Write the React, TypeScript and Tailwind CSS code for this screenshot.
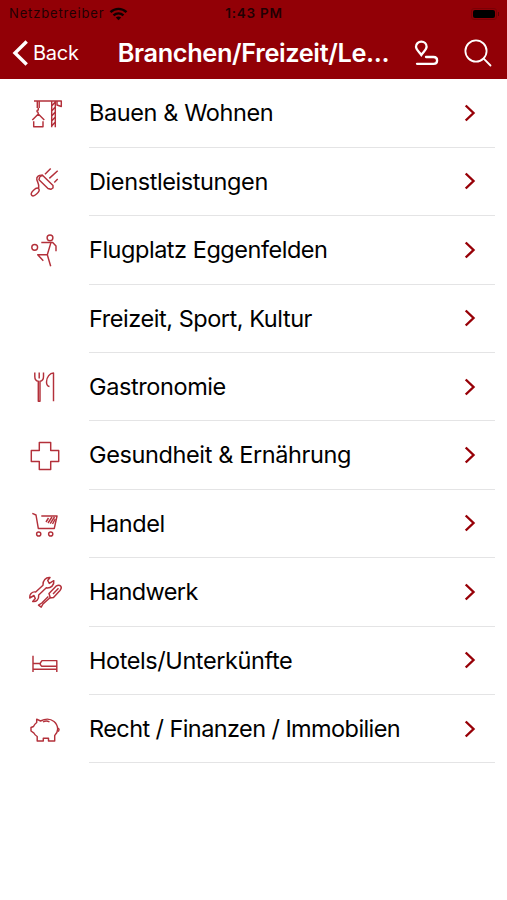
import type { ReactNode } from 'react';

type Category = {
  label: string;
  tracking: string;
  icon?: ReactNode;
};

const categories: Category[] = [
  {
    label: 'Bauen & Wohnen',
    tracking: 'tracking-[-0.4px]',
    icon: (
      <>
        <path d="M9 7H36.3V12.5L32 11V7M26.7 7V33.3M30.3 7V33.3M26.7 12L30.3 8M26.7 17L30.3 13M26.7 22L30.3 18M26.7 27L30.3 23M26.7 32L30.3 28" />
        <path d="M12.3 7V14M14.2 7V14M13.3 14V16C11.5 16 11.5 18 13 18.3L13.3 20M7.3 26L13.3 20L19.3 26M8.7 27.3V32.7H18V27.3" />
      </>
    ),
  },
  {
    label: 'Dienstleistungen',
    tracking: 'tracking-[-0.4px]',
    icon: (
      <>
        <path d="M25.7 6.4L20 12.2M32.7 8.7L24.3 16.4M32.7 17L29.3 20.4" />
        <path d="M17.5 13.2L28 23.5V26L25.8 27.3L23 26.5L14 17.8L14.7 15Z" />
        <path d="M17.5 13.2C14 12.8 11.3 14.5 11.8 17.5C12.3 20 14.5 22 13.7 26.2" />
        <ellipse cx="10.2" cy="30" rx="4.8" ry="2.4" transform="rotate(-43 10.2 30)" />
      </>
    ),
  },
  {
    label: 'Flugplatz Eggenfelden',
    tracking: 'tracking-[-0.47px]',
    icon: (
      <>
        <circle cx="25" cy="7.8" r="2.9" />
        <circle cx="9.7" cy="17.3" r="2.9" />
        <path d="M16.3 12.4H27.7L31 16V21.3M26 12.4L22.3 24.7L25.7 36.3M22.3 24.7H12.7L18.3 30.7" />
      </>
    ),
  },
  { label: 'Freizeit, Sport, Kultur', tracking: 'tracking-[-0.45px]' },
  {
    label: 'Gastronomie',
    tracking: 'tracking-[-0.4px]',
    icon: (
      <path d="M9.8 5.5V9.5C9.8 12 11 14 13.3 14.3V34.3H15V14.3C17.2 14 18.5 12 18.5 9.5V5.5M14.2 5.5V11.5M28.5 34.3V6C25 6 21.5 10 21.5 15C21.5 17.5 22.7 19.2 24.5 19.5" />
    ),
  },
  {
    label: 'Gesundheit & Ernährung',
    tracking: 'tracking-[-0.38px]',
    icon: (
      <path d="M14.3 6.5H25.7V14.5H33.7V25.5H25.7V33.5H14.3V25.5H6.3V14.5H14.3Z" />
    ),
  },
  {
    label: 'Handel',
    tracking: 'tracking-[-0.45px]',
    icon: (
      <>
        <path d="M7.3 9.4L11 11L13.3 24.4H29.3L32 12H16.3" />
        <circle cx="13.7" cy="30" r="2.1" />
        <circle cx="25.7" cy="30" r="2.1" />
        <path d="M21 18L23.5 14M23 19L27 13M25.2 19.7L29.5 13M27.5 20L30.3 15" />
      </>
    ),
  },
  {
    label: 'Handwerk',
    tracking: 'tracking-[-0.6px]',
    icon: (
      <>
        <path d="M10.7 20L18 13.2C17.4 8.5 21 5 25 5.5L22.7 8.5L24.3 11.4L28.8 8.7C29.5 13 26 16.5 21.3 15.8L13.7 23C14 27 11.7 30.2 7.7 29.5L10.3 26.5L9 23.5L4.7 26C4 22.5 7 19.3 10.7 20Z" />
        <path d="M25.2 25.5L24 21.5L31 14.2C35 11.7 38 15 35 18.5L28.5 25.5L24.7 26L18 32L16.2 35.2L13.5 33.2L16.8 31L23.3 24.5M28 22L33.5 16.3" />
      </>
    ),
  },
  {
    label: 'Hotels/Unterkünfte',
    tracking: 'tracking-[-0.42px]',
    icon: (
      <path d="M8 14.8V31M8 22.4H15.3M15.3 22L17 19.6H31.8V31M15.3 22V23.5L16.5 25.2H31.8M8 28.3H31.8" />
    ),
  },
  {
    label: 'Recht / Finanzen / Immobilien',
    tracking: 'tracking-[-0.59px]',
    icon: (
      <>
        <path d="M11.7 10.2L15.5 12C20 9.7 25.5 9.7 29 12.5C31.5 14.5 32.5 17 32.7 20C32.5 23 31.5 25 29.7 26.5V32H23.5V29.2H18.3V32H12.2V27.5C10.5 26.5 9.5 25.5 8.7 23.8L6 22V18.5L8.5 17.5C9.3 15.5 10.5 14.5 11.7 13.5Z" />
        <path d="M18 13C20 11.7 22.5 11.7 24.5 13M32.7 19.5C34.5 19 34.5 22.5 32.5 22.5" />
      </>
    ),
  },
];

const StatusBar = () => (
  <div className="relative flex h-[27px] items-center justify-between pl-[9px] pr-[8px] text-[13px] text-[#210003]">
    <div className="flex items-center gap-[4px]">
      <span className="tracking-[0.85px]">Netzbetreiber</span>
      <svg width="19" height="14" viewBox="0 0 18 14" fill="none" stroke="#100001" strokeWidth="2.4">
        <path d="M1 5.2C5.5 0.8 12.5 0.8 17 5.2M4 8.4C7 5.7 11 5.7 14 8.4" />
        <path d="M6.3 10.5C8 9.3 10 9.3 11.7 10.5L9 13.2Z" fill="#100001" stroke="none" />
      </svg>
    </div>
    <span className="absolute left-1/2 -translate-x-1/2 whitespace-nowrap pl-px text-[13.5px] font-semibold tracking-[0.75px]">
      1:43 PM
    </span>
    <div className="flex items-center gap-px">
      <div className="h-[12px] w-[26px] rounded-[3px] border border-[#7a0005] p-px">
        <div className="h-full rounded-[2px] bg-black" />
      </div>
      <div className="h-[4px] w-px bg-[#5c0003]" />
    </div>
  </div>
);

const NavBar = () => (
  <div className="flex h-[52px] items-center pl-[12px] pr-[15px] text-white">
    <button className="flex items-center">
      <svg width="17" height="26" viewBox="0 0 17 26" fill="none" stroke="currentColor" strokeWidth="3.4">
        <path d="M14.7 1.5L3 13L14.7 24.5" />
      </svg>
      <span className="ml-[4px] text-[20px] tracking-[-0.25px]">Back</span>
    </button>
    <h1 className="ml-[39px] w-[275px] whitespace-nowrap text-[25.3px] font-semibold tracking-[-0.35px]">
      Branchen/Freizeit/Le...
    </h1>
    <button className="ml-auto">
      <svg width="25" height="26" viewBox="0 0 25 26" fill="none" stroke="currentColor" strokeWidth="2.3" strokeLinecap="round">
        <path d="M7.3 15C5 11.8 2 9.5 2 6.8C2 3.8 4.3 1.7 7.3 1.7S12.6 3.8 12.6 6.8C12.6 9.5 9.6 11.8 7.3 15Z" />
        <path d="M12 17H19.5C24.3 17 24.3 23.8 19.5 23.8H3" />
      </svg>
    </button>
    <button className="ml-[25px]">
      <svg width="28" height="28" viewBox="0 0 28 28" fill="none" stroke="currentColor" strokeWidth="1.8" strokeLinecap="round">
        <circle cx="12" cy="12" r="10.6" />
        <path d="M19.7 19.7L26.5 26.5" />
      </svg>
    </button>
  </div>
);

const CategoryRow = ({ label, tracking, icon }: Category) => (
  <li className="flex h-[68.4px] pr-[12px]">
    <div className="flex w-[89px] items-center pl-[25px]">
      {icon && (
        <svg width="40" height="40" viewBox="0 0 40 40" fill="none" stroke="#b3303a" strokeWidth="1.45" strokeLinejoin="round">
          {icon}
        </svg>
      )}
    </div>
    <div className="flex flex-1 items-center justify-between border-b border-[#e4e4e5] pr-[19px]">
      <span className={`whitespace-nowrap text-[23.5px] text-black ${tracking}`}>{label}</span>
      <svg width="12" height="18" viewBox="0 0 12 18" fill="none" stroke="#970007" strokeWidth="2.4">
        <path d="M1.7 1.5L9.5 9L1.7 16.5" />
      </svg>
    </div>
  </li>
);

export default function App() {
  return (
    <div className="h-[900px] w-[507px] overflow-hidden bg-white font-['Inter',sans-serif]">
      <header className="h-[79px] bg-[#920006]">
        <StatusBar />
        <NavBar />
      </header>
      <ul className="pt-[0.4px]">
        {categories.map((category) => (
          <CategoryRow key={category.label} {...category} />
        ))}
      </ul>
    </div>
  );
}
